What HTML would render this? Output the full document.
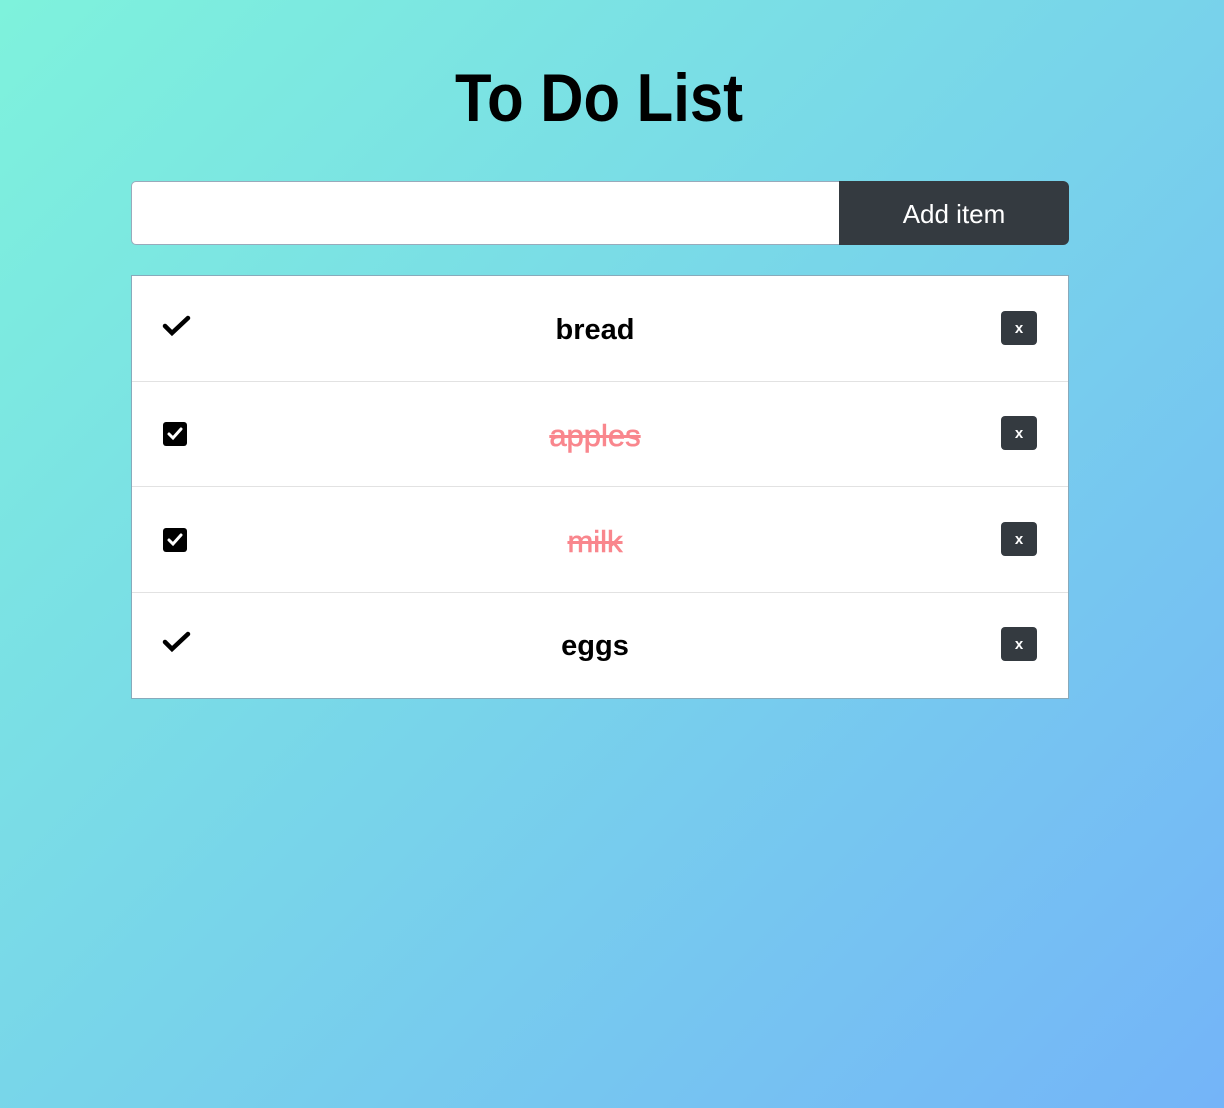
<!DOCTYPE html>
<html><head><meta charset="utf-8"><style>
html,body{margin:0;padding:0}
body{width:1224px;height:1108px;background:linear-gradient(135deg,#7ef2dc 0%,#78d4ea 50%,#74b4f8 100%);font-family:"Liberation Sans",Arial,sans-serif;position:relative;overflow:hidden}
h1{position:absolute;left:0;width:1198px;top:58px;margin:0;text-align:center;font-size:68px;font-weight:bold;line-height:80px;color:#000;transform:scaleX(0.88);transform-origin:599px 0}
.inp{position:absolute;left:131px;top:181px;width:709px;height:64px;background:#fff;border:1px solid #9ab;border-right:none;border-radius:5px 0 0 5px;box-sizing:border-box}
.btn{position:absolute;left:839px;top:181px;width:230px;height:64px;background:#343a40;color:#fff;border-radius:0 6px 6px 0;font-size:26px;text-align:center;line-height:66px}
.list{position:absolute;left:131px;top:275px;width:938px;height:424px;background:#fff;border:1px solid #8ab;box-sizing:border-box}
.row{position:absolute;left:0;width:936px;height:105px;border-bottom:1px solid #e2e2e2}
.row .t{position:absolute;left:0;width:926px;text-align:center;top:36px;font-size:29px;font-weight:bold;line-height:36px;color:#000}
.row .t.done{color:#f9868d;text-decoration:line-through;font-weight:normal;-webkit-text-stroke:0.6px #f9868d;font-size:31px;top:37px}
.x{position:absolute;left:869px;top:35px;width:36px;height:34px;background:#343a40;border-radius:4px;color:#fff;font-size:15px;font-weight:bold;text-align:center;line-height:36px}
.ic{position:absolute;left:30px;top:38px}
</style></head><body>
<h1>To Do List</h1>
<div class="inp"></div>
<div class="btn">Add item</div>
<div class="list">
 <div class="row" style="top:0"><svg class="ic" width="30" height="26" viewBox="0 0 30 26"><path d="M3 12 L10 19 L26 4" stroke="#000" stroke-width="4.5" fill="none" stroke-linecap="round" stroke-linejoin="miter"/></svg><div class="t">bread</div><div class="x">x</div></div>
 <div class="row" style="top:105px"><svg class="ic" width="30" height="30" viewBox="0 0 30 30" style="top:35px;left:31px"><rect x="0" y="6" width="24" height="24" rx="3" fill="#000"/><path d="M6 18 L10 22 L18 13" stroke="#fff" stroke-width="3" fill="none" stroke-linecap="round"/></svg><div class="t done">apples</div><div class="x">x</div></div>
 <div class="row" style="top:211px"><svg class="ic" width="30" height="30" viewBox="0 0 30 30" style="top:35px;left:31px"><rect x="0" y="6" width="24" height="24" rx="3" fill="#000"/><path d="M6 18 L10 22 L18 13" stroke="#fff" stroke-width="3" fill="none" stroke-linecap="round"/></svg><div class="t done">milk</div><div class="x">x</div></div>
 <div class="row" style="top:316px;border-bottom:none"><svg class="ic" width="30" height="26" viewBox="0 0 30 26"><path d="M3 12 L10 19 L26 4" stroke="#000" stroke-width="4.5" fill="none" stroke-linecap="round"/></svg><div class="t">eggs</div><div class="x">x</div></div>
</div>
</body></html>
